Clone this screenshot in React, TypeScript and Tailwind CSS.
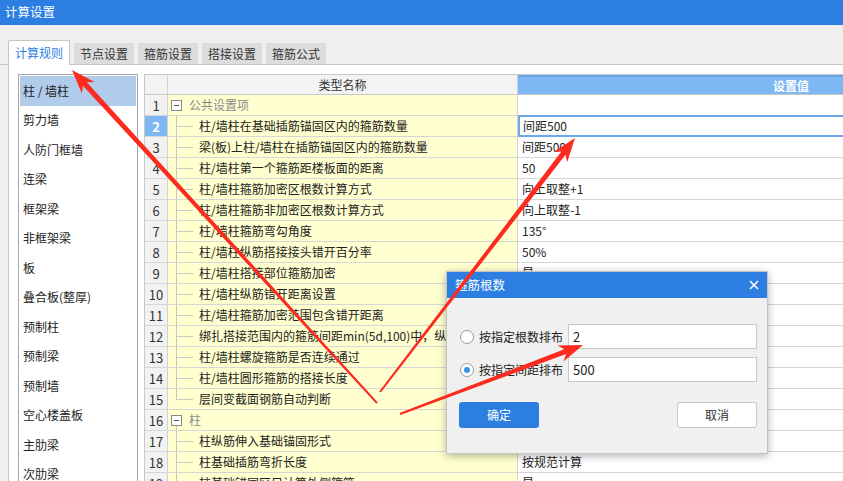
import React from "react";

type Row = { n: number; name: string; value?: string; group?: boolean; sel?: boolean; last?: boolean };

const rows: Row[] = [
  { n: 1, name: "公共设置项", group: true, value: "" },
  { n: 2, name: "柱/墙柱在基础插筋锚固区内的箍筋数量", value: "间距500", sel: true },
  { n: 3, name: "梁(板)上柱/墙柱在插筋锚固区内的箍筋数量", value: "间距500" },
  { n: 4, name: "柱/墙柱第一个箍筋距楼板面的距离", value: "50" },
  { n: 5, name: "柱/墙柱箍筋加密区根数计算方式", value: "向上取整+1" },
  { n: 6, name: "柱/墙柱箍筋非加密区根数计算方式", value: "向上取整-1" },
  { n: 7, name: "柱/墙柱箍筋弯勾角度", value: "135°" },
  { n: 8, name: "柱/墙柱纵筋搭接接头错开百分率", value: "50%" },
  { n: 9, name: "柱/墙柱搭接部位箍筋加密", value: "是" },
  { n: 10, name: "柱/墙柱纵筋错开距离设置", value: "按规范计算" },
  { n: 11, name: "柱/墙柱箍筋加密范围包含错开距离", value: "是" },
  { n: 12, name: "绑扎搭接范围内的箍筋间距min(5d,100)中，纵筋d的取值", value: "上下层最小直径" },
  { n: 13, name: "柱/墙柱螺旋箍筋是否连续通过", value: "是" },
  { n: 14, name: "柱/墙柱圆形箍筋的搭接长度", value: "max(lae,300)" },
  { n: 15, name: "层间变截面钢筋自动判断", value: "是", last: true },
  { n: 16, name: "柱", group: true, value: "" },
  { n: 17, name: "柱纵筋伸入基础锚固形式", value: "全部伸入基底弯折" },
  { n: 18, name: "柱基础插筋弯折长度", value: "按规范计算" },
  { n: 19, name: "柱基础锚固区只计算外侧箍筋", value: "是" },
];

const listItems = [
  "柱 / 墙柱",
  "剪力墙",
  "人防门框墙",
  "连梁",
  "框架梁",
  "非框架梁",
  "板",
  "叠合板(整厚)",
  "预制柱",
  "预制梁",
  "预制墙",
  "空心楼盖板",
  "主肋梁",
  "次肋梁",
];

const tabs = ["计算规则", "节点设置", "箍筋设置", "搭接设置", "箍筋公式"];

function arrowPoints(x1: number, y1: number, x2: number, y2: number) {
  const dx = x2 - x1;
  const dy = y2 - y1;
  const L = Math.hypot(dx, dy);
  const ux = dx / L;
  const uy = dy / L;
  const px = -uy;
  const py = ux;
  const hl = 24;
  const hw = 8.5;
  const sw = 2.6;
  const tw = 1.0;
  const notch = 5;
  const bx = x2 - ux * hl;
  const by = y2 - uy * hl;
  const nx = bx + ux * notch;
  const ny = by + uy * notch;
  const pts = [
    [x1 + px * tw, y1 + py * tw],
    [nx + px * sw, ny + py * sw],
    [bx + px * hw, by + py * hw],
    [x2, y2],
    [bx - px * hw, by - py * hw],
    [nx - px * sw, ny - py * sw],
    [x1 - px * tw, y1 - py * tw],
  ];
  return pts.map((p) => `${p[0].toFixed(1)},${p[1].toFixed(1)}`).join(" ");
}

function Radio({ checked }: { checked?: boolean }) {
  return (
    <span className="w-[14px] h-[14px] rounded-full border border-[#9a9a9a] bg-white flex items-center justify-center shrink-0">
      {checked && <span className="w-[6px] h-[6px] rounded-full bg-[#3d8ee9]" />}
    </span>
  );
}

function TreeCell({ row }: { row: Row }) {
  if (row.group) {
    return (
      <div className="relative h-full flex items-center pl-[21px]">
        <span className="absolute left-[3px] top-[5px] w-[11px] h-[11px] border border-[#8a8a8a] bg-white flex items-center justify-center">
          <span className="w-[5px] h-px bg-[#555]" />
        </span>
        {row.n === 16 && <span className="absolute left-[8px] top-[16px] bottom-0 w-px bg-[#c8c8c8]" />}
        <span className="text-[#8a8a8a]">{row.name}</span>
      </div>
    );
  }
  return (
    <div className="relative h-full flex items-center pl-[31px] whitespace-nowrap overflow-hidden">
      <span className={`absolute left-[8px] top-0 w-px bg-[#c8c8c8] ${row.last ? "h-[10px]" : "bottom-0"}`} />
      <span className="absolute left-[8px] top-[10px] w-[17px] h-px bg-[#c8c8c8]" />
      <span>{row.name}</span>
    </div>
  );
}

export default function App() {
  return (
    <div className="relative w-[843px] h-[481px] overflow-hidden bg-[#efefef] text-[#222] font-['Noto_Sans_CJK_SC','Microsoft_YaHei',sans-serif] text-[12px] leading-none">
      {/* title bar */}
      <div className="h-[25px] bg-[#2c7fe0] text-white text-[12.5px] flex items-center pl-[5px]">计算设置</div>

      {/* tabs */}
      <div className="h-[40px] flex items-end pl-[8px] gap-[4px] border-b border-[#c6c6c6]">
        {tabs.map((t, i) =>
          i === 0 ? (
            <div
              key={t}
              className="h-[25px] -mb-px px-[6px] bg-white border border-b-0 border-[#c6c6c6] rounded-t-[2px] text-[#2c7fe0] text-[12px] flex items-center"
            >
              {t}
            </div>
          ) : (
            <div
              key={t}
              className="h-[21px] px-[6px] bg-[#dddddd] rounded-t-[2px] text-[#333] text-[12px] flex items-center"
            >
              {t}
            </div>
          )
        )}
      </div>

      {/* content */}
      <div className="ml-[8px] h-[416px] bg-white border-l border-[#c6c6c6] flex pt-[9px] pl-[9px] gap-[6px]">
        {/* left list */}
        <div className="w-[120px] shrink-0 border border-[#a8a8a8] p-px pt-[1px] h-[420px]">
          {listItems.map((it, i) => (
            <div
              key={it}
              className={`h-[29.5px] flex items-center pl-[3px] text-[12px] ${i === 0 ? "bg-[#b1cbeb]" : ""}`}
            >
              {it}
            </div>
          ))}
        </div>

        {/* table */}
        <div className="flex-1 border-t border-l border-[#c8c8c8] overflow-hidden text-[12px]">
          {/* header */}
          <div className="h-[20px] flex border-b border-[#c8c8c8]">
            <div className="w-[23px] shrink-0 bg-[#f3f3f3] border-r border-[#d2d2d2]" />
            <div className="w-[350px] shrink-0 bg-[#f3f3f3] border-r border-[#d2d2d2] flex items-center justify-center text-[#333]">
              类型名称
            </div>
            <div className="flex-1 bg-[#7db8f5] border-t-2 border-[#6aa6ea] text-white font-bold flex items-center pl-[255px]">
              设置值
            </div>
          </div>
          {rows.map((r) => (
            <div key={r.n} className="h-[21px] flex border-b border-[#d6d6d6]">
              <div
                className={`w-[23px] shrink-0 border-r border-[#d2d2d2] flex items-center justify-center text-[13px] ${
                  r.sel ? "bg-[#7db8f5] text-white font-bold" : "bg-[#f2f2f2] text-[#333]"
                }`}
              >
                {r.n}
              </div>
              <div className="w-[350px] shrink-0 bg-[#ffffd0] border-r border-[#d2d2d2] overflow-hidden text-[#222]">
                <TreeCell row={r} />
              </div>
              <div
                className={`flex-1 flex items-center whitespace-nowrap ${
                  r.sel ? "border-2 border-r-0 border-[#6fa8e8] pl-[3px] -my-px" : "pl-[4px]"
                }`}
              >
                {r.value}
              </div>
            </div>
          ))}
        </div>
      </div>

      {/* dialog */}
      <div className="absolute left-[446px] top-[271px] w-[322px] h-[183px] bg-[#f0f0f0] border border-[#c4c4c4] shadow-[0_2px_8px_rgba(0,0,0,0.3)] flex flex-col">
        <div className="h-[26px] bg-[#2c7fe0] text-white text-[12.5px] flex items-center justify-between pl-[8px] pr-[8px] shrink-0">
          <span>箍筋根数</span>
          <svg width="10" height="10" viewBox="0 0 10 10">
            <path d="M1 1 L9 9 M9 1 L1 9" stroke="white" strokeWidth="1.6" />
          </svg>
        </div>
        <div className="flex-1 pl-[13px] pr-[10px] pt-[26px] flex flex-col">
          <div className="flex items-center gap-[5px] h-[25px]">
            <Radio />
            <span className="text-[12px] w-[84px] whitespace-nowrap">按指定根数排布</span>
            <div className="flex-1 h-[25px] bg-white border border-[#c8c8c8] flex items-center pl-[4px] text-[13px]">2</div>
          </div>
          <div className="flex items-center gap-[5px] h-[25px] mt-[8px]">
            <Radio checked />
            <span className="text-[12px] w-[84px] whitespace-nowrap">按指定间距排布</span>
            <div className="flex-1 h-[25px] bg-white border border-[#c8c8c8] flex items-center pl-[4px] text-[13px]">500</div>
          </div>
          <div className="flex justify-between mt-[20px] pl-[-2px]">
            <button className="w-[80px] h-[26px] -ml-[1px] bg-[#2c7fe0] rounded-[3px] text-white text-[12px] flex items-center justify-center">
              确定
            </button>
            <button className="w-[80px] h-[26px] bg-white border border-[#c8c8c8] rounded-[3px] text-[#333] text-[12px] flex items-center justify-center">
              取消
            </button>
          </div>
        </div>
      </div>

      {/* red annotation arrows */}
      <svg className="absolute inset-0 pointer-events-none" width="843" height="481">
        <polygon points={arrowPoints(377, 403, 72, 70)} fill="#fd2a1e" />
        <polygon points={arrowPoints(380, 392, 575, 138)} fill="#fd2a1e" />
        <polygon points={arrowPoints(400, 414, 583, 345)} fill="#fd2a1e" />
      </svg>
    </div>
  );
}
